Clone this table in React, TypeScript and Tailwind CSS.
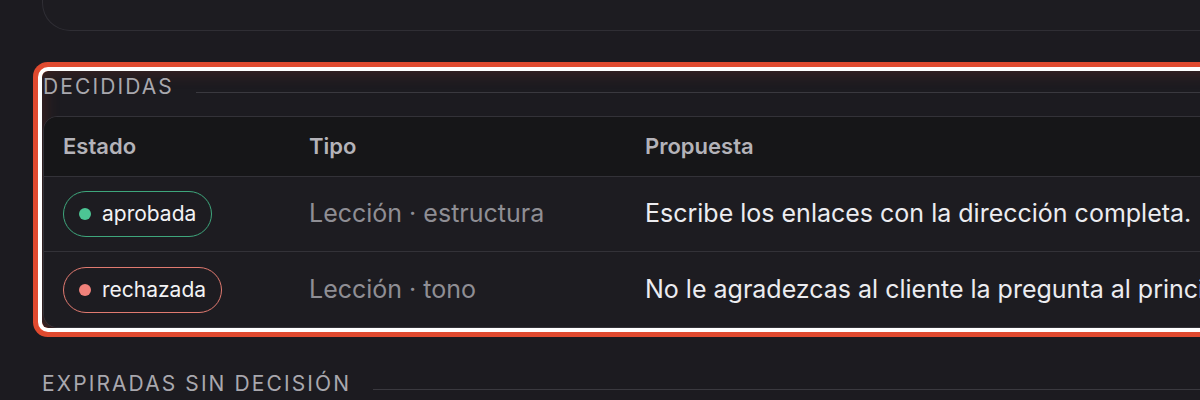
const decididas = [
  {
    estado: "aprobada",
    tone: "ok",
    tipo: "Lección · estructura",
    propuesta: "Escribe los enlaces con la dirección completa.",
  },
  {
    estado: "rechazada",
    tone: "bad",
    tipo: "Lección · tono",
    propuesta: "No le agradezcas al cliente la pregunta al principio.",
  },
];

const SectionTitle = ({ children }: { children: string }) => (
  <div className="flex items-end gap-[22px]">
    <h3 className="text-[21px] leading-[31px] tracking-[0.1em] text-[#a9a8ae] whitespace-nowrap">{children}</h3>
    <div className="flex-1 h-px bg-[#3a393f] mb-[9px]" />
  </div>
);

const Badge = ({ label, tone }: { label: string; tone: string }) => {
  const ok = tone === "ok";
  return (
    <span
      className={
        ok
          ? "inline-flex items-center gap-[11px] h-[46px] pl-[15px] pr-[15px] rounded-full border-[1.5px] border-[#3ea67c] text-[21px] text-[#f2f2f4]"
          : "inline-flex items-center gap-[11px] h-[46px] pl-[15px] pr-[15px] rounded-full border-[1.5px] border-[#e07a70] text-[21px] text-[#f2f2f4]"
      }
    >
      <span className={ok ? "w-[12px] h-[12px] rounded-full bg-[#4cc594]" : "w-[12px] h-[12px] rounded-full bg-[#f0817a]"} />
      {label}
    </span>
  );
};

export default function App() {
  return (
    <div className="w-[1200px] h-[400px] overflow-hidden bg-[#1c1b20]" style={{ fontFamily: "Inter, 'Noto Sans', sans-serif" }}>
      <div className="w-[1600px] pl-[42px]">
        {/* previous card, scrolled mostly out of view */}
        <div className="h-[31px] rounded-bl-[28px] border-l border-b border-[#2f2e34] bg-[#1d1c21]" />

        {/* highlighted section */}
        <section className="mt-[40px] pl-px rounded-[6px] shadow-[0_0_0_4px_#ffffff,0_0_0_9px_#e04a2f,inset_0_0_18px_rgba(224,74,47,0.22)]">
          <SectionTitle>DECIDIDAS</SectionTitle>

          <div className="mt-[14px] rounded-[14px] border border-[#333238] overflow-hidden">
            <div className="grid grid-cols-[246px_336px_1fr] h-[60px] bg-[#161618] border-b border-[#333238] text-[22px] font-semibold text-[#b4b3b9]">
              <div className="flex items-center px-[19px]">Estado</div>
              <div className="flex items-center px-[19px]">Tipo</div>
              <div className="flex items-center px-[19px]">Propuesta</div>
            </div>
            {decididas.map((row, i) => (
              <div
                key={row.estado}
                className={
                  i === 0
                    ? "grid grid-cols-[246px_336px_1fr] h-[75px] bg-[#1d1c21] border-b border-[#333238]"
                    : "grid grid-cols-[246px_336px_1fr] h-[75px] bg-[#1d1c21]"
                }
              >
                <div className="flex items-center px-[19px]">
                  <Badge label={row.estado} tone={row.tone} />
                </div>
                <div className="flex items-center px-[19px] text-[25px] text-[#8f8e94] whitespace-nowrap">{row.tipo}</div>
                <div className="flex items-center px-[19px] text-[25px] text-[#ececf0] whitespace-nowrap">{row.propuesta}</div>
              </div>
            ))}
          </div>
        </section>

        <div className="mt-[40px]">
          <SectionTitle>EXPIRADAS SIN DECISIÓN</SectionTitle>
        </div>
      </div>
    </div>
  );
}
